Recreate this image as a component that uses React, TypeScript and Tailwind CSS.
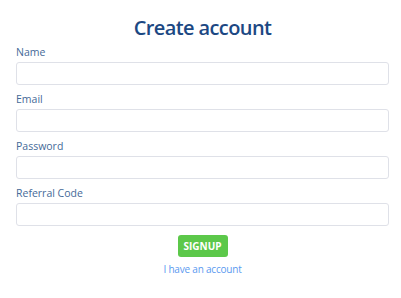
import React from "react";

const fields = ["Name", "Email", "Password", "Referral Code"];

export default function App() {
  return (
    <div
      className="w-[401px] h-[298px] bg-white pl-4 pr-3 pt-[13px]"
      style={{ fontFamily: '"Open Sans", sans-serif' }}
    >
      <h1 className="text-center text-[20px] leading-[30px] font-semibold tracking-[-0.6px] text-[#1c4883]">
        Create account
      </h1>
      <div className="mt-[1px] flex flex-col">
        {fields.map((f) => (
          <div key={f} className="flex flex-col mb-[6px]">
            <label className="text-[10.5px] leading-[16px] text-[#456a98]">{f}</label>
            <input
              className="mt-[2px] h-[23px] w-full rounded-[3px] border border-[#dfe1e8] bg-white outline-none"
              type="text"
            />
          </div>
        ))}
      </div>
      <div className="mt-[3px] flex flex-col items-center">
        <button className="h-[22px] w-[50px] rounded-[3px] bg-[#5cc84a] text-[10px] font-bold text-white">
          SIGNUP
        </button>
        <a className="mt-[5px] text-[10px] leading-[14px] tracking-[-0.2px] text-[#5b9af0]">I have an account</a>
      </div>
    </div>
  );
}
